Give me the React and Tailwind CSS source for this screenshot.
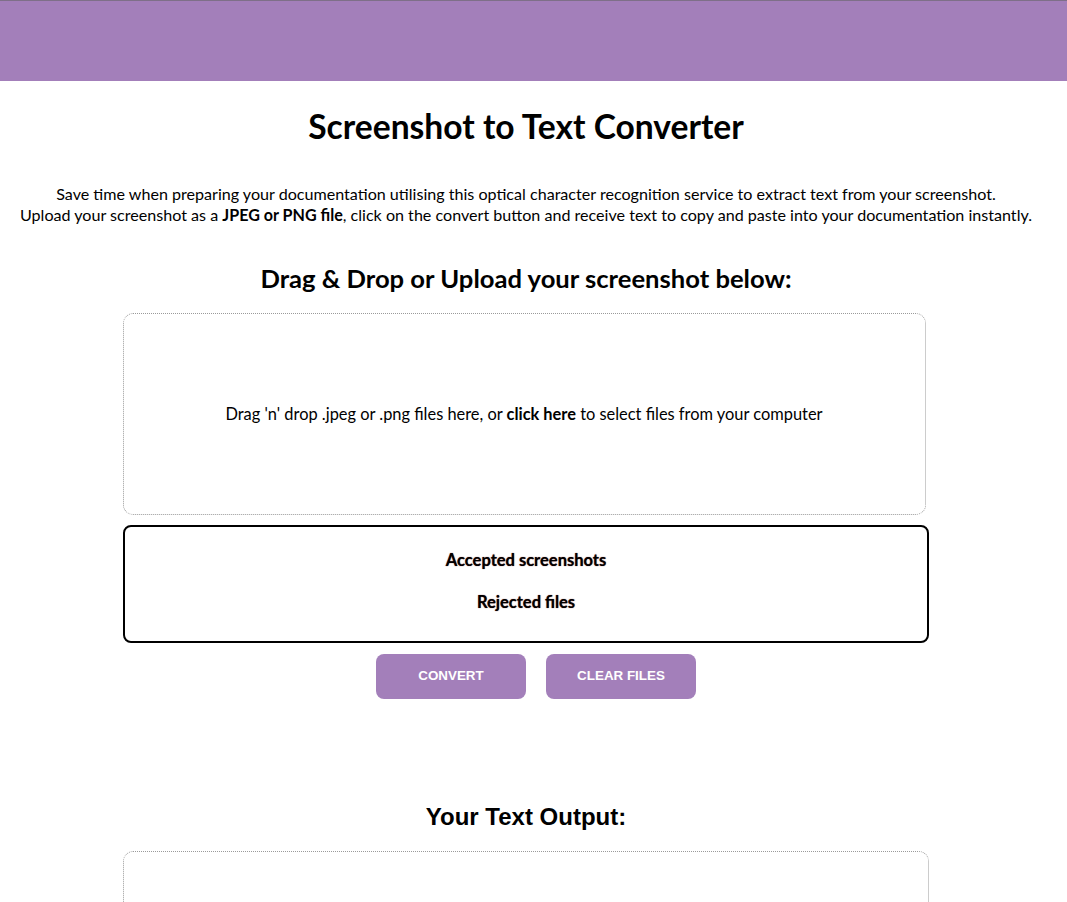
export default function App() {
  return (
    <div className="min-h-[902px] bg-white text-black font-['Lato',_'Open_Sans',_sans-serif]">
      <div className="h-[81px] bg-[#a37fba] border-t border-[#7e6f88]" />
      <div className="pr-[15px] flex flex-col items-center">
        <h1 className="mt-[26px] text-[33.6px] leading-[38px] font-bold">Screenshot to Text Converter</h1>
        <p className="mt-[38px] text-[16.1px] leading-[21px] text-center">
          Save time when preparing your documentation utilising this optical character recognition service to extract text from your screenshot.
          <br />
          Upload your screenshot as a <b>JPEG or PNG file</b>, click on the convert button and receive text to copy and paste into your documentation instantly.
        </p>
        <h2 className="mt-[39px] text-[25.6px] leading-[29px] font-bold">Drag &amp; Drop or Upload your screenshot below:</h2>
        <div className="mt-[20px] mr-[4px] w-[803px] h-[202px] border border-dotted border-[#9a9a9a] rounded-[10px] flex items-center justify-center">
          <p className="text-[16.4px]">
            Drag 'n' drop .jpeg or .png files here, or <b>click here</b> to select files from your computer
          </p>
        </div>
        <div className="mt-[10px] w-[806px] h-[118px] border-2 border-black rounded-[8px] flex flex-col items-center pt-[21px] gap-[18px]">
          <div className="text-[16.5px] leading-[24px] font-bold [text-shadow:0_0_1px_#7a2a2a]">Accepted screenshots</div>
          <div className="text-[16.5px] leading-[24px] font-bold [text-shadow:0_0_1px_#7a2a2a]">Rejected files</div>
        </div>
        <div className="mt-[11px] flex">
          <button className="ml-[20px] w-[150px] h-[45px] rounded-[8px] bg-[#a37fba] text-white text-[13.4px] font-bold uppercase font-['Liberation_Sans',_sans-serif]">Convert</button>
          <button className="ml-[20px] w-[150px] h-[45px] rounded-[8px] bg-[#a37fba] text-white text-[13.4px] font-bold uppercase font-['Liberation_Sans',_sans-serif]">Clear Files</button>
        </div>
        <h2 className="mt-[103px] text-[24px] leading-[29px] font-bold font-['Liberation_Sans',_sans-serif]">Your Text Output:</h2>
        <div className="mt-[20px] w-[806px] h-[200px] border border-dotted border-[#9a9a9a] rounded-[10px]" />
      </div>
    </div>
  );
}
